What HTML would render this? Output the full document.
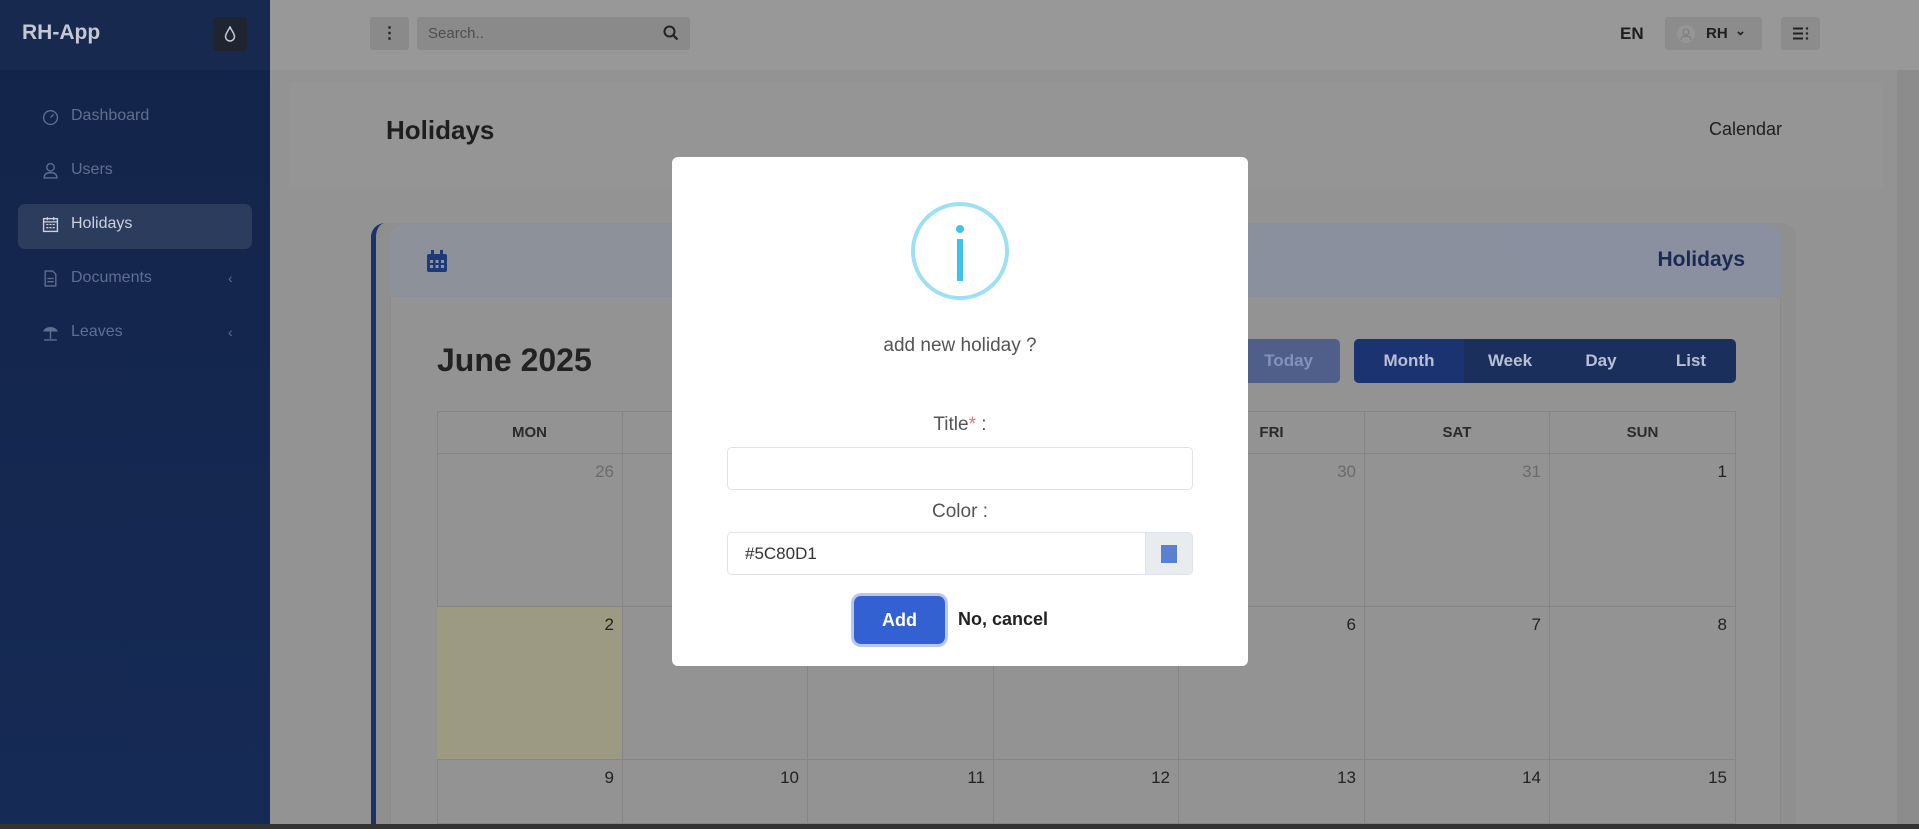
<!DOCTYPE html>
<html style="width:1919px;height:829px;overflow:hidden"><head><meta charset="utf-8"><style>
*{box-sizing:border-box;margin:0;padding:0}
body{width:1919px;height:829px;overflow:hidden;position:relative;background:#939393;font-family:"Liberation Sans",sans-serif;color:#222}
.abs{position:absolute}
.side{left:0;top:0;width:270px;height:829px;background:linear-gradient(180deg,#132449,#152a55)}
.side .hd{position:absolute;left:0;top:0;width:270px;height:70px;background:#182950}
.mi{position:absolute;left:42px;font-size:16px;color:#5f6f90;display:flex;align-items:center;gap:12px}
.mi svg{width:17px;height:17px}
.chev{position:absolute;left:228px;color:#5f6f90;font-size:14px}
.cell{position:absolute;border-right:1px solid #858585;border-bottom:1px solid #858585;text-align:right;padding:8px 8px 0 0;font-size:17px;color:#222}
.hcell{position:absolute;top:411px;height:43px;border-right:1px solid #858585;border-bottom:1px solid #858585;text-align:center;line-height:43px;font-weight:bold;font-size:15px;color:#2a2a2a}
</style></head><body>
<div class="abs" style="left:270px;top:0;width:1649px;height:70px;background:#989898"></div>
<div class="abs" style="left:1897px;top:70px;width:22px;height:759px;background:#8c8c8c"></div>
<div class="abs" style="left:289px;top:82px;width:1594px;height:106px;background:#959595"></div>
<div class="abs side"><div class="hd"></div>
<div class="abs" style="left:22px;top:21px;font-size:21px;font-weight:bold;color:#c3c8d2">RH-App</div>
<div class="abs" style="left:213px;top:17px;width:34px;height:34px;border-radius:4px;background:#1f2530;display:flex;align-items:center;justify-content:center"><svg width="12" height="16" viewBox="0 0 12 16"><path d="M6 1C4 5 1.5 8 1.5 10.5a4.5 4.5 0 0 0 9 0C10.5 8 8 5 6 1z" fill="none" stroke="#c8ccd4" stroke-width="1.5"/></svg></div>
<div class="mi" style="top:107px"><svg viewBox="0 0 16 16"><circle cx="8" cy="9" r="6.5" fill="none" stroke="#5f6f90" stroke-width="1.3"/><path d="M8 9l3-3" stroke="#5f6f90" stroke-width="1.3"/></svg>Dashboard</div>
<div class="mi" style="top:161px"><svg viewBox="0 0 16 16"><circle cx="8" cy="5" r="3.5" fill="none" stroke="#5f6f90" stroke-width="1.3"/><path d="M2 15c0-4 3-5 6-5s6 1 6 5z" fill="none" stroke="#5f6f90" stroke-width="1.3"/></svg>Users</div>
<div class="abs" style="left:18px;top:204px;width:234px;height:45px;border-radius:7px;background:#2c3c5c"></div>
<div class="mi" style="top:215px;color:#cdd2dc"><svg viewBox="0 0 16 16"><rect x="1.5" y="2.5" width="13" height="12" fill="none" stroke="#cdd2dc" stroke-width="1.3"/><path d="M1.5 5.5h13M4 8h2M7 8h2M10 8h2M4 11h2M7 11h2M10 11h2M5 1v3M11 1v3" stroke="#cdd2dc" stroke-width="1.2"/></svg>Holidays</div>
<div class="mi" style="top:269px"><svg viewBox="0 0 16 16"><path d="M3 1h7l3 3v11H3z" fill="none" stroke="#5f6f90" stroke-width="1.3"/><path d="M5 8h6M5 11h6" stroke="#5f6f90" stroke-width="1.2"/></svg>Documents</div>
<div class="chev" style="top:270px">‹</div>
<div class="mi" style="top:323px"><svg viewBox="0 0 16 16"><path d="M1 7c2-5 11-6 14 0z" fill="#5f6f90"/><path d="M8 7v7M2 15h12" stroke="#5f6f90" stroke-width="1.3"/></svg>Leaves</div>
<div class="chev" style="top:324px">‹</div>
</div>
<div class="abs" style="left:370px;top:17px;width:39px;height:33px;border-radius:3px;background:#8a8a8a;text-align:center;line-height:33px;font-weight:bold;font-size:16px">⋮</div>
<div class="abs" style="left:417px;top:17px;width:273px;height:33px;border-radius:3px;background:#8a8a8a"><span class="abs" style="left:11px;top:8px;font-size:15px;color:#4e4e4e">Search..</span>
<svg class="abs" style="left:246px;top:8px" width="16" height="16" viewBox="0 0 16 16"><circle cx="6.5" cy="6.5" r="5" fill="none" stroke="#222" stroke-width="2"/><path d="M10 10l4.5 4.5" stroke="#222" stroke-width="2.2"/></svg></div>
<div class="abs" style="left:1620px;top:24px;font-size:17px;font-weight:bold;color:#1e1e1e">EN</div>
<div class="abs" style="left:1665px;top:17px;width:97px;height:33px;border-radius:3px;background:#8c8c8c"><svg class="abs" style="left:12px;top:8px" width="18" height="18" viewBox="0 0 18 18"><circle cx="9" cy="9" r="9" fill="#959595"/><circle cx="9" cy="7" r="3" fill="none" stroke="#7a7a7a"/><path d="M4 15c0-3 2-4 5-4s5 1 5 4" fill="none" stroke="#7a7a7a"/></svg><span class="abs" style="left:41px;top:8px;font-size:15px;font-weight:bold;color:#1e1e1e">RH</span><span class="abs" style="left:70px;top:6px;font-size:13px;font-weight:bold;color:#1e1e1e">⌄</span></div>
<div class="abs" style="left:1781px;top:17px;width:39px;height:33px;border-radius:3px;background:#8c8c8c"><svg class="abs" style="left:12px;top:10px" width="16" height="13" viewBox="0 0 16 13"><path d="M0 1.5h10M0 6.5h10M0 11.5h10" stroke="#222" stroke-width="2"/><circle cx="14" cy="1.5" r="1.2" fill="#222"/><circle cx="14" cy="6.5" r="1.2" fill="#222"/><circle cx="14" cy="11.5" r="1.2" fill="#222"/></svg></div>
<div class="abs" style="left:386px;top:115px;font-size:26px;font-weight:bold;color:#1e1e1e">Holidays</div>
<div class="abs" style="left:1700px;top:119px;width:82px;text-align:right;font-size:18px;color:#1e1e1e">Calendar</div>
<div class="abs" style="left:371px;top:223px;width:1425px;height:601px;border-radius:14px 14px 0 0;background:#8f8f8f;border-left:5px solid #1b3369"></div>
<div class="abs" style="left:390px;top:224px;width:1391px;height:600px;background:#939393;border:1px solid #8a8a8a;border-bottom:none;border-radius:14px 14px 0 0"></div>
<div class="abs" style="left:390px;top:224px;width:1391px;height:73px;border-radius:14px 14px 0 0;background:linear-gradient(90deg,#8d9199,#8a90a0);border-bottom:1px solid #8a8e98"></div>
<svg class="abs" style="left:427px;top:250px" width="20" height="22" viewBox="0 0 20 22"><rect x="0" y="4" width="20" height="18" rx="2" fill="#1e3a78"/><rect x="4" y="0" width="3" height="6" fill="#1e3a78"/><rect x="13" y="0" width="3" height="6" fill="#1e3a78"/><g fill="#8e929c"><rect x="3" y="10" width="3" height="3"/><rect x="8.5" y="10" width="3" height="3"/><rect x="14" y="10" width="3" height="3"/><rect x="3" y="15" width="3" height="3"/><rect x="8.5" y="15" width="3" height="3"/><rect x="14" y="15" width="3" height="3"/></g></svg>
<div class="abs" style="left:1600px;top:248px;width:145px;text-align:right;font-size:21px;font-weight:bold;color:#1a2a52">Holidays</div>
<div class="abs" style="left:437px;top:342px;font-size:32px;font-weight:bold;color:#222">June 2025</div>
<div class="abs" style="left:1200px;top:339px;width:140px;height:44px;border-radius:5px;background:#505f8a;color:#8292b8;font-weight:bold;font-size:17px;line-height:44px;text-align:right;padding-right:27px">Today</div>
<div class="abs" style="left:1354px;top:339px;width:382px;height:44px;border-radius:5px;background:#1a2f5c;overflow:hidden;display:flex;font-weight:bold;font-size:17px;color:#b8c0d4;line-height:44px">
<div style="width:110px;background:#1b3370;text-align:center">Month</div><div style="width:92px;text-align:center">Week</div><div style="width:90px;text-align:center">Day</div><div style="width:90px;text-align:center">List</div></div>
<div class="abs" style="left:437px;top:411px;width:1299px;height:413px;border-left:1px solid #858585;border-top:1px solid #858585"></div>
<div class="hcell" style="left:437px;width:186px">MON</div><div class="hcell" style="left:623px;width:185px">TUE</div><div class="hcell" style="left:808px;width:186px">WED</div><div class="hcell" style="left:994px;width:185px">THU</div><div class="hcell" style="left:1179px;width:186px">FRI</div><div class="hcell" style="left:1365px;width:185px">SAT</div><div class="hcell" style="left:1550px;width:186px">SUN</div>
<div class="cell" style="left:437px;top:454px;width:186px;height:153px;color:#6a6a6a">26</div><div class="cell" style="left:623px;top:454px;width:185px;height:153px;color:#6a6a6a">27</div><div class="cell" style="left:808px;top:454px;width:186px;height:153px;color:#6a6a6a">28</div><div class="cell" style="left:994px;top:454px;width:185px;height:153px;color:#6a6a6a">29</div><div class="cell" style="left:1179px;top:454px;width:186px;height:153px;color:#6a6a6a">30</div><div class="cell" style="left:1365px;top:454px;width:185px;height:153px;color:#6a6a6a">31</div><div class="cell" style="left:1550px;top:454px;width:186px;height:153px">1</div>
<div class="cell" style="left:437px;top:607px;width:186px;height:153px;background:#9c9a82">2</div><div class="cell" style="left:623px;top:607px;width:185px;height:153px">3</div><div class="cell" style="left:808px;top:607px;width:186px;height:153px">4</div><div class="cell" style="left:994px;top:607px;width:185px;height:153px">5</div><div class="cell" style="left:1179px;top:607px;width:186px;height:153px">6</div><div class="cell" style="left:1365px;top:607px;width:185px;height:153px">7</div><div class="cell" style="left:1550px;top:607px;width:186px;height:153px">8</div>
<div class="cell" style="left:437px;top:760px;width:186px;height:64px">9</div><div class="cell" style="left:623px;top:760px;width:185px;height:64px">10</div><div class="cell" style="left:808px;top:760px;width:186px;height:64px">11</div><div class="cell" style="left:994px;top:760px;width:185px;height:64px">12</div><div class="cell" style="left:1179px;top:760px;width:186px;height:64px">13</div><div class="cell" style="left:1365px;top:760px;width:185px;height:64px">14</div><div class="cell" style="left:1550px;top:760px;width:186px;height:64px">15</div>
<div class="abs" style="left:0;top:824px;width:1919px;height:5px;background:#333"></div>
<div class="abs" style="left:672px;top:157px;width:576px;height:509px;background:#fff;border-radius:6px">
<div class="abs" style="left:239px;top:45px;width:98px;height:98px;border-radius:50%;border:4px solid #9de0f6"></div>
<div class="abs" style="left:284px;top:68px;width:8px;height:8px;border-radius:50%;background:#3fc3ee"></div>
<div class="abs" style="left:285px;top:82px;width:6px;height:42px;background:#3fc3ee"></div>
<div class="abs" style="left:0;top:178px;width:576px;text-align:center;font-size:19px;color:#545454">add new holiday ?</div>
<div class="abs" style="left:0;top:257px;width:576px;text-align:center;font-size:19px;color:#545454">Title<span style="color:#f27474">*</span> :</div>
<div class="abs" style="left:55px;top:290px;width:466px;height:43px;border:1px solid #dfe2ea;border-radius:5px"></div>
<div class="abs" style="left:0;top:344px;width:576px;text-align:center;font-size:19px;color:#545454">Color :</div>
<div class="abs" style="left:55px;top:375px;width:466px;height:43px;border:1px solid #dfe2ea;border-radius:5px;overflow:hidden"><span class="abs" style="left:17px;top:11px;font-size:17px;color:#333">#5C80D1</span><div class="abs" style="right:0;top:0;width:47px;height:43px;background:#e9ecef;border-left:1px solid #dfe2ea"><div class="abs" style="left:15px;top:12px;width:16px;height:18px;background:#5c80d1"></div></div></div>
<div class="abs" style="left:182px;top:439px;width:91px;height:48px;border-radius:7px;background:#3461d1;box-shadow:0 0 0 3px #b7c7ee;color:#fff;font-weight:bold;font-size:18px;text-align:center;line-height:48px">Add</div>
<div class="abs" style="left:286px;top:452px;font-size:18px;font-weight:bold;color:#222">No, cancel</div>
</div>
</body></html>
